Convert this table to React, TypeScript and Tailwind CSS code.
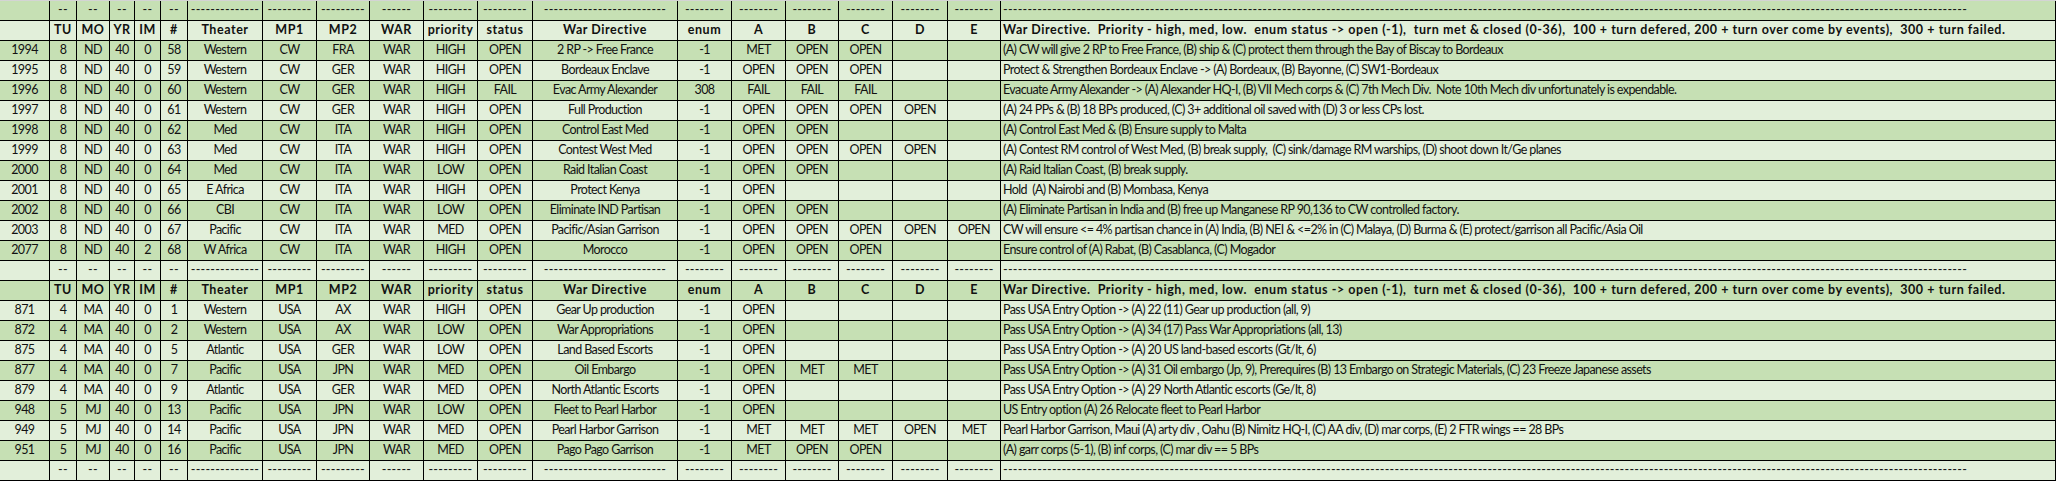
type Row = string[];

const DASHES: Row = [
  "",
  "--",
  "--",
  "--",
  "--",
  "--",
  "--------------",
  "---------",
  "---------",
  "------",
  "---------",
  "---------",
  "-------------------------",
  "--------",
  "--------",
  "--------",
  "--------",
  "--------",
  "--------",
  "-".repeat(197),
];

const HEADER: Row = [
  "",
  "TU",
  "MO",
  "YR",
  "IM",
  "#",
  "Theater",
  "MP1",
  "MP2",
  "WAR",
  "priority",
  "status",
  "War Directive",
  "enum",
  "A",
  "B",
  "C",
  "D",
  "E",
  "War Directive.  Priority - high, med, low.  enum status -> open (-1),  turn met & closed (0-36),  100 + turn defered, 200 + turn over come by events),  300 + turn failed.",
];

const CW_ROWS: Row[] = [
  ["1994", "8", "ND", "40", "0", "58", "Western", "CW", "FRA", "WAR", "HIGH", "OPEN", "2 RP -> Free France", "-1", "MET", "OPEN", "OPEN", "", "", "(A) CW will give 2 RP to Free France, (B) ship & (C) protect them through the Bay of Biscay to Bordeaux"],
  ["1995", "8", "ND", "40", "0", "59", "Western", "CW", "GER", "WAR", "HIGH", "OPEN", "Bordeaux Enclave", "-1", "OPEN", "OPEN", "OPEN", "", "", "Protect & Strengthen Bordeaux Enclave -> (A) Bordeaux, (B) Bayonne, (C) SW1-Bordeaux"],
  ["1996", "8", "ND", "40", "0", "60", "Western", "CW", "GER", "WAR", "HIGH", "FAIL", "Evac Army Alexander", "308", "FAIL", "FAIL", "FAIL", "", "", "Evacuate Army Alexander -> (A) Alexander HQ-I, (B) VII Mech corps & (C) 7th Mech Div.  Note 10th Mech div unfortunately is expendable."],
  ["1997", "8", "ND", "40", "0", "61", "Western", "CW", "GER", "WAR", "HIGH", "OPEN", "Full Production", "-1", "OPEN", "OPEN", "OPEN", "OPEN", "", "(A) 24 PPs & (B) 18 BPs produced, (C) 3+ additional oil saved with (D) 3 or less CPs lost."],
  ["1998", "8", "ND", "40", "0", "62", "Med", "CW", "ITA", "WAR", "HIGH", "OPEN", "Control East Med", "-1", "OPEN", "OPEN", "", "", "", "(A) Control East Med & (B) Ensure supply to Malta"],
  ["1999", "8", "ND", "40", "0", "63", "Med", "CW", "ITA", "WAR", "HIGH", "OPEN", "Contest West Med", "-1", "OPEN", "OPEN", "OPEN", "OPEN", "", "(A) Contest RM control of West Med, (B) break supply,  (C) sink/damage RM warships, (D) shoot down It/Ge planes"],
  ["2000", "8", "ND", "40", "0", "64", "Med", "CW", "ITA", "WAR", "LOW", "OPEN", "Raid Italian Coast", "-1", "OPEN", "OPEN", "", "", "", "(A) Raid Italian Coast, (B) break supply."],
  ["2001", "8", "ND", "40", "0", "65", "E Africa", "CW", "ITA", "WAR", "HIGH", "OPEN", "Protect Kenya", "-1", "OPEN", "", "", "", "", "Hold  (A) Nairobi and (B) Mombasa, Kenya"],
  ["2002", "8", "ND", "40", "0", "66", "CBI", "CW", "ITA", "WAR", "LOW", "OPEN", "Eliminate IND Partisan", "-1", "OPEN", "OPEN", "", "", "", "(A) Eliminate Partisan in India and (B) free up Manganese RP 90,136 to CW controlled factory."],
  ["2003", "8", "ND", "40", "0", "67", "Pacific", "CW", "ITA", "WAR", "MED", "OPEN", "Pacific/Asian Garrison", "-1", "OPEN", "OPEN", "OPEN", "OPEN", "OPEN", "CW will ensure <= 4% partisan chance in (A) India, (B) NEI & <=2% in (C) Malaya, (D) Burma & (E) protect/garrison all Pacific/Asia Oil"],
  ["2077", "8", "ND", "40", "2", "68", "W Africa", "CW", "ITA", "WAR", "HIGH", "OPEN", "Morocco", "-1", "OPEN", "OPEN", "OPEN", "", "", "Ensure control of (A) Rabat, (B) Casablanca, (C) Mogador"],
];

const USA_ROWS: Row[] = [
  ["871", "4", "MA", "40", "0", "1", "Western", "USA", "AX", "WAR", "HIGH", "OPEN", "Gear Up production", "-1", "OPEN", "", "", "", "", "Pass USA Entry Option -> (A) 22 (11) Gear up production (all, 9)"],
  ["872", "4", "MA", "40", "0", "2", "Western", "USA", "AX", "WAR", "LOW", "OPEN", "War Appropriations", "-1", "OPEN", "", "", "", "", "Pass USA Entry Option -> (A) 34 (17) Pass War Appropriations (all, 13)"],
  ["875", "4", "MA", "40", "0", "5", "Atlantic", "USA", "GER", "WAR", "LOW", "OPEN", "Land Based Escorts", "-1", "OPEN", "", "", "", "", "Pass USA Entry Option -> (A) 20 US land-based escorts (Gt/It, 6)"],
  ["877", "4", "MA", "40", "0", "7", "Pacific", "USA", "JPN", "WAR", "MED", "OPEN", "Oil Embargo", "-1", "OPEN", "MET", "MET", "", "", "Pass USA Entry Option -> (A) 31 Oil embargo (Jp, 9), Prerequires (B) 13 Embargo on Strategic Materials, (C) 23 Freeze Japanese assets"],
  ["879", "4", "MA", "40", "0", "9", "Atlantic", "USA", "GER", "WAR", "MED", "OPEN", "North Atlantic Escorts", "-1", "OPEN", "", "", "", "", "Pass USA Entry Option -> (A) 29 North Atlantic escorts (Ge/It, 8)"],
  ["948", "5", "MJ", "40", "0", "13", "Pacific", "USA", "JPN", "WAR", "LOW", "OPEN", "Fleet to Pearl Harbor", "-1", "OPEN", "", "", "", "", "US Entry option (A) 26 Relocate fleet to Pearl Harbor"],
  ["949", "5", "MJ", "40", "0", "14", "Pacific", "USA", "JPN", "WAR", "MED", "OPEN", "Pearl Harbor Garrison", "-1", "MET", "MET", "MET", "OPEN", "MET", "Pearl Harbor Garrison, Maui (A) arty div , Oahu (B) Nimitz HQ-I, (C) AA div, (D) mar corps, (E) 2 FTR wings == 28 BPs"],
  ["951", "5", "MJ", "40", "0", "16", "Pacific", "USA", "JPN", "WAR", "MED", "OPEN", "Pago Pago Garrison", "-1", "MET", "OPEN", "OPEN", "", "", "(A) garr corps (5-1), (B) inf corps, (C) mar div == 5 BPs"],
];

type Kind = "dash" | "head" | "data";

const ROWS: { cells: Row; kind: Kind }[] = [
  { cells: DASHES, kind: "dash" },
  { cells: HEADER, kind: "head" },
  ...CW_ROWS.map((cells) => ({ cells, kind: "data" as Kind })),
  { cells: DASHES, kind: "dash" },
  { cells: HEADER, kind: "head" },
  ...USA_ROWS.map((cells) => ({ cells, kind: "data" as Kind })),
  { cells: DASHES, kind: "dash" },
];

const KIND_CLASS: Record<Kind, string> = {
  dash: "tracking-[0.25px]",
  head: "font-bold tracking-[0.55px]",
  data: "tracking-[-0.6px]",
};

export default function App() {
  return (
    <div className="w-[2056px] h-[481px] bg-[#e2efda] border-t border-[#d4d4d4] overflow-hidden font-['Lato','Liberation_Sans',sans-serif] text-[12.5px] text-[#111]">
      <div className="grid grid-cols-[50px_27px_33px_25px_26px_27px_75px_54px_53px_54px_54px_55px_145px_54px_54px_53px_54px_55px_53px_1fr]">
        {ROWS.map((row, r) =>
          row.cells.map((text, c) => {
            const last = c === row.cells.length - 1;
            return (
              <div
                key={`${r}-${c}`}
                className={`h-5 flex items-center overflow-hidden whitespace-pre border-b border-r border-black ${
                  r % 2 === 0 ? "bg-[#c6e0b4]" : "bg-[#e2efda]"
                } ${last ? "justify-start pl-[2px]" : "justify-center"} ${KIND_CLASS[row.kind]}`}
              >
                {text}
              </div>
            );
          })
        )}
      </div>
    </div>
  );
}
